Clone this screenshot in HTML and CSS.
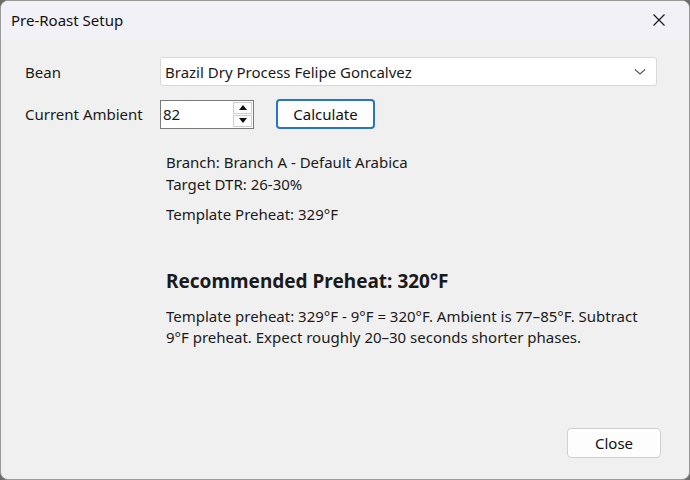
FILE: index.html
```html
<!DOCTYPE html>
<html lang="en">
  <head>
    <meta charset="UTF-8" />
    <title>Pre-Roast Setup</title>
    <link rel="stylesheet" href="styles.css">
  </head>
  <body>
    <div class="window">
      <div class="titlebar">
        <span class="title">Pre-Roast Setup</span>
        <button class="close-x" aria-label="Close">
          <svg width="14" height="14" viewBox="0 0 14 14">
            <path d="M1.5 1.5 L12.5 12.5 M12.5 1.5 L1.5 12.5" stroke="#1a1a1a" stroke-width="1.2" fill="none" />
          </svg>
        </button>
      </div>

      <div class="content">
        <div class="form">
          <label class="field-label">Bean</label>
          <div class="combo">
            <span>Brazil Dry Process Felipe Goncalvez</span>
            <svg width="12" height="8" viewBox="0 0 12 8">
              <path d="M1 1.5 L6 6 L11 1.5" stroke="#555" stroke-width="1.1" fill="none" />
            </svg>
          </div>

          <label class="field-label">Current Ambient</label>
          <div class="ambient-row">
            <div class="spin">
              <span class="spin-value">82</span>
              <div class="spin-buttons">
                <div class="spin-btn">
                  <svg width="8" height="5" viewBox="0 0 8 5"><path d="M0 5 L4 0 L8 5 Z" fill="#111" /></svg>
                </div>
                <div class="spin-btn">
                  <svg width="8" height="5" viewBox="0 0 8 5"><path d="M0 0 L4 5 L8 0 Z" fill="#111" /></svg>
                </div>
              </div>
            </div>
            <button class="btn btn-default">Calculate</button>
          </div>
        </div>

        <div class="results">
          <div class="info">
            <div>Branch: Branch A - Default Arabica</div>
            <div>Target DTR: 26-30%</div>
          </div>
          <div class="template">Template Preheat: 329°F</div>

          <h2 class="recommend">Recommended Preheat: 320°F</h2>
          <p class="note">
            Template preheat: 329°F - 9°F = 320°F. Ambient is 77–85°F. Subtract
            9°F preheat. Expect roughly 20–30 seconds shorter phases.
          </p>
        </div>

        <div class="footer">
          <button class="btn">Close</button>
        </div>
      </div>
    </div>
  </body>
</html>
```

FILE: styles.css
```css
* {
  box-sizing: border-box;
}

body {
  margin: 0;
  width: 690px;
  height: 480px;
  background-color: #6b6b6b;
  font-family: 'Noto Sans', 'Liberation Sans', sans-serif;
  font-size: 14px;
  color: #1a1a1a;
  overflow: hidden;
}

.window {
  width: 690px;
  height: 480px;
  background-color: #f0f0f0;
  border: 1px solid #9a9a9a;
  border-radius: 8px;
  overflow: hidden;
  display: flex;
  flex-direction: column;
}

.titlebar {
  height: 39px;
  flex: none;
  display: flex;
  align-items: center;
  justify-content: space-between;
  background-color: #f3f1f8;
  padding-left: 10px;
  padding-bottom: 1px;
}

.title {
  font-size: 15px;
  color: #111;
}

.close-x {
  width: 46px;
  height: 38px;
  border: none;
  background: transparent;
  display: flex;
  align-items: center;
  justify-content: center;
  padding: 0;
  margin-right: 7px;
}

.content {
  flex: 1;
  display: flex;
  flex-direction: column;
  padding: 17px 28px 21px 24px;
}

.form {
  display: grid;
  grid-template-columns: 135px 1fr;
  row-gap: 13px;
  align-items: center;
}

.field-label {
  font-size: 15px;
}

.combo {
  height: 29px;
  margin-right: 4px;
  background-color: #fff;
  border: 1px solid #d9d9d9;
  border-radius: 3px;
  display: flex;
  align-items: center;
  justify-content: space-between;
  padding: 0 10px 0 4px;
  font-size: 15px;
}

.ambient-row {
  display: flex;
  align-items: center;
  gap: 22px;
}

.spin {
  width: 94px;
  height: 29px;
  background-color: #fff;
  border: 1px solid #7a7a7a;
  display: flex;
  align-items: center;
  justify-content: space-between;
  padding: 0 1px 0 2px;
  font-size: 15px;
}

.spin-buttons {
  display: flex;
  flex-direction: column;
  gap: 1px;
}

.spin-btn {
  width: 19px;
  height: 12px;
  border: 1px solid #cfcfcf;
  background-color: #fdfdfd;
  display: flex;
  align-items: center;
  justify-content: center;
}

.btn {
  font-family: inherit;
  font-size: 15px;
  color: #111;
  background-color: #fdfdfd;
  border: 1px solid #d0d0d0;
  border-radius: 4px;
  height: 30px;
  padding: 0 15px;
  min-width: 94px;
}

.btn-default {
  border: 2px solid #2a74c5;
  min-width: 99px;
}

.results {
  padding-left: 141px;
  padding-top: 22px;
  font-size: 15px;
  line-height: 22px;
}

.template {
  margin-top: 8px;
}

.recommend {
  font-size: 19px;
  font-weight: bold;
  margin: 42px 0 0;
  line-height: 28px;
}

.note {
  margin: 11px 0 0;
  line-height: 21px;
  max-width: 490px;
}

.footer {
  margin-top: auto;
  display: flex;
  justify-content: flex-end;
}
```
